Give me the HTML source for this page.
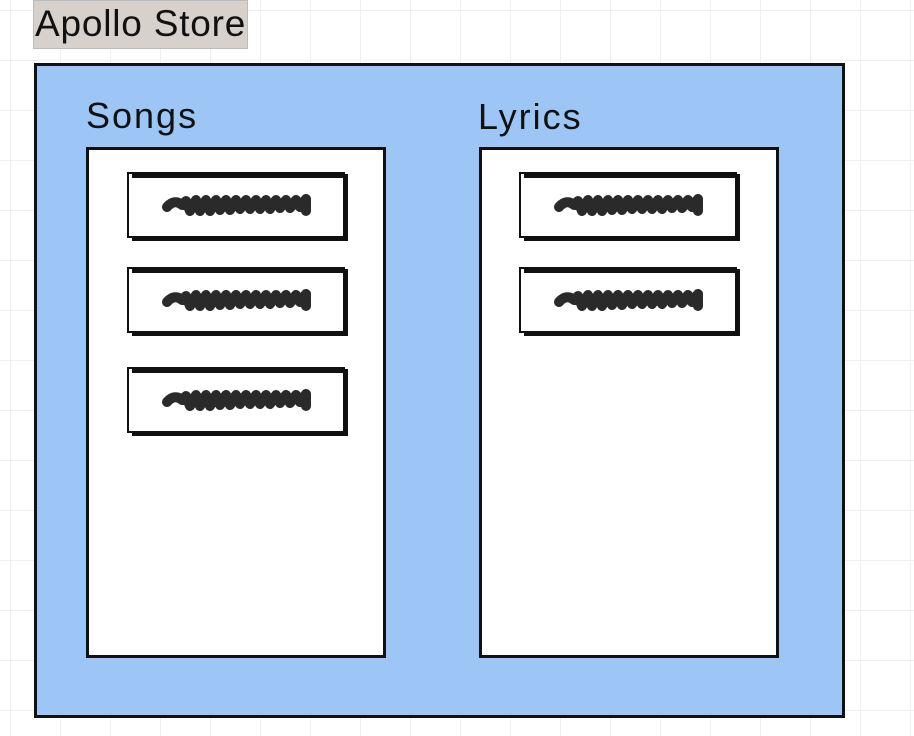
<!DOCTYPE html>
<html><head><style>
body{margin:0;width:914px;height:736px;overflow:hidden;background:#fff;position:relative;font-family:"Liberation Sans",sans-serif;
background-image:linear-gradient(#f0f0f0 1px,transparent 1px),linear-gradient(90deg,#f0f0f0 1px,transparent 1px);background-size:50px 50px;background-position:10px 10px;}
.a{position:absolute}
.lbl{left:33px;top:0;width:215px;height:49px;background:#d8d0cb;border:1px solid #bbb;font-size:37px;line-height:46px;color:#111;padding-left:1px;box-sizing:border-box;letter-spacing:0.8px;white-space:nowrap}
.blue{left:34px;top:63px;width:811px;height:655px;background:#9dc6f6;border:3px solid #111;box-sizing:border-box}
.h{font-size:36px;color:#111;letter-spacing:2px}
.panel{background:#fff;border:3px solid #111;box-sizing:border-box;width:300px;height:511px;top:147px}
</style></head><body>
<div class="a lbl">Apollo Store</div>
<div class="a blue"></div>
<div class="a h" style="left:86px;top:95px">Songs</div>
<div class="a h" style="left:478px;top:96px">Lyrics</div>
<div class="a panel" style="left:86px"></div>
<div class="a panel" style="left:479px"></div>
<svg class="a" style="left:0;top:0" width="914" height="736">
<defs><g id="it">
<rect x="0" y="0" width="216" height="64" fill="#fff" stroke="#111" stroke-width="2"/>
<path d="M4 3 H218 V66 H4" fill="none" stroke="#111" stroke-width="4"/>
<path d="M39 34 C44 28 50 28 54 32 L58 28 L62 38 L68 27 L72 38 L78 27 L82 38 L88 27 L92 37 L98 27 L102 37 L108 27 L112 36 L118 27 L122 36 L128 27 L132 36 L138 27 L142 36 L148 27 L152 35 L158 27 L162 35 L168 27 L172 34 L178 26 V38" fill="none" stroke="#2a2a2a" stroke-width="10" stroke-linecap="round" stroke-linejoin="round"/>
</g></defs>
<use href="#it" x="128" y="173"/>
<use href="#it" x="128" y="268"/>
<use href="#it" x="128" y="368"/>
<use href="#it" x="520" y="173"/>
<use href="#it" x="520" y="268"/>
</svg>
</body></html>
